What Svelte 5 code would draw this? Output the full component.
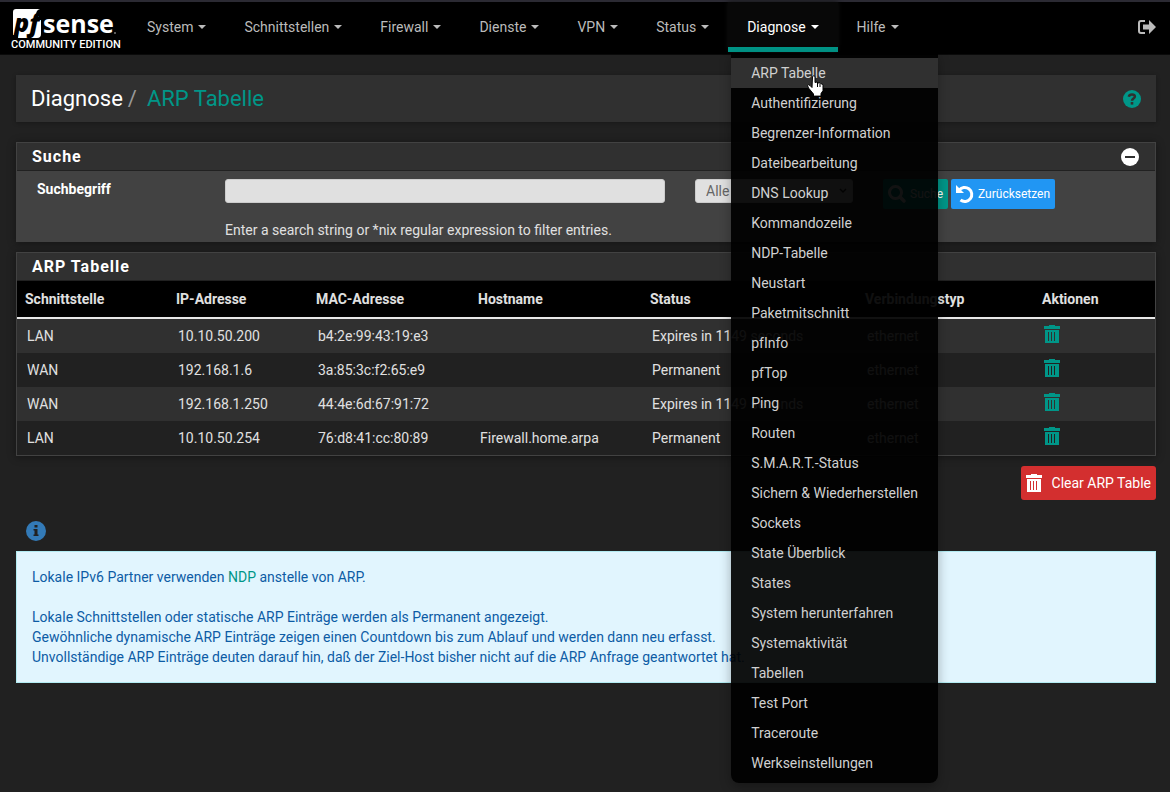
<script>
    const nav = ['System', 'Schnittstellen', 'Firewall', 'Dienste', 'VPN', 'Status', 'Diagnose', 'Hilfe'];

    const menu = [
        'ARP Tabelle',
        'Authentifizierung',
        'Begrenzer-Information',
        'Dateibearbeitung',
        'DNS Lookup',
        'Kommandozeile',
        'NDP-Tabelle',
        'Neustart',
        'Paketmitschnitt',
        'pfInfo',
        'pfTop',
        'Ping',
        'Routen',
        'S.M.A.R.T.-Status',
        'Sichern & Wiederherstellen',
        'Sockets',
        'State Überblick',
        'States',
        'System herunterfahren',
        'Systemaktivität',
        'Tabellen',
        'Test Port',
        'Traceroute',
        'Werkseinstellungen'
    ];

    const rows = [
        { iface: 'LAN', ip: '10.10.50.200', mac: 'b4:2e:99:43:19:e3', host: '', status: 'Expires in 1149 seconds' },
        { iface: 'WAN', ip: '192.168.1.6', mac: '3a:85:3c:f2:65:e9', host: '', status: 'Permanent' },
        { iface: 'WAN', ip: '192.168.1.250', mac: '44:4e:6d:67:91:72', host: '', status: 'Expires in 1149 seconds' },
        { iface: 'LAN', ip: '10.10.50.254', mac: '76:d8:41:cc:80:89', host: 'Firewall.home.arpa', status: 'Permanent' }
    ];

    let open = $state('Diagnose');
    let term = $state('');
    let field = $state('Alle');
    let collapsed = $state(false);

    function toggle(name) {
        open = open === name ? '' : name;
    }

    function reset() {
        term = '';
        field = 'Alle';
    }
</script>

{#snippet trash()}
    <svg class="trash" viewBox="0 0 16 18" width="16" height="18" aria-hidden="true">
        <path fill="currentColor" fill-rule="evenodd" d="M5 0h6v1h5v3H0V1h5zM1 5h14v13H1zM4 7v9h1V7zm3 0v9h1V7zm3 0v9h1V7z" />
    </svg>
{/snippet}

<div class="page">
    <header>
        <a class="brand" href="#home" aria-label="pfSense Community Edition">
            <svg viewBox="0 0 106 30" width="106" height="30">
                <path fill="#fff" d="M5 0h24q-4 1-4 6h3v2h-3v3h5v14q0 4-4 4H7V26H2V3q0-3 3-3z" />
                <text class="logo-pf" x="3" y="23">pf</text>
                <text class="logo-sense" x="32" y="24">sense</text>
                <circle cx="104" cy="24" r="1" fill="#777" />
            </svg>
            <span>COMMUNITY EDITION</span>
        </a>
        <nav>
            {#each nav as name}
                <div class="nav-item" class:active={open === name}>
                    <button class="nav-link" aria-expanded={open === name} onclick={() => toggle(name)}>
                        {name}<span class="caret"></span>
                    </button>
                    {#if name === 'Diagnose' && open === name}
                        <ul class="dropdown">
                            {#each menu as entry, i}
                                <li>
                                    <a href="#menu" class:hover={i === 0}>{entry}</a>
                                    {#if i === 0}
                                        <svg class="pointer" viewBox="0 0 17 22" width="17" height="22" aria-hidden="true">
                                            <path fill="#fff" stroke="#000" d="M5.500 1.500q1.500-1.500 2.500 0v6l2-.5 1 1 2-.2 1 1 1.500.3.500 1.500v5l-2 3v2.500H6.500V19L1.500 13l-1-2.500q1-1.500 2.500 0l2 2z" />
                                            <path stroke="#000" d="M10.500 8v4M13 8.500V12" />
                                        </svg>
                                    {/if}
                                </li>
                            {/each}
                        </ul>
                    {/if}
                </div>
            {/each}
        </nav>
        <a class="logout" href="#logout" aria-label="Abmelden">
            <svg viewBox="0 0 18 14" width="18" height="14">
                <path fill="none" stroke="currentColor" stroke-width="2" d="M7 1H3Q1 1 1 3v8q0 2 2 2h4" />
                <path fill="currentColor" d="M5 4.500h6V0l7 7-7 7V9.500H5z" />
            </svg>
        </a>
    </header>

    <main>
        <div class="breadcrumb">
            <h1>Diagnose<span class="slash">/</span><a href="#arp">ARP Tabelle</a></h1>
            <a class="help" href="#help" aria-label="Hilfe">
                <svg viewBox="0 0 18 18" width="18" height="18">
                    <circle cx="9" cy="9" r="9" fill="currentColor" />
                    <path fill="none" stroke="#303030" stroke-width="2.500" d="M5.800 6.800Q6.300 4.500 9 4.500t2.900 2.100c0 2-2.900 2-2.900 4.200" />
                    <path fill="#303030" d="M7.700 12h2.600v2.600H7.700z" />
                </svg>
            </a>
        </div>

        <section class="panel">
            <div class="panel-heading">
                <h2>Suche</h2>
                <button class="collapse" aria-label="Suche einklappen" onclick={() => (collapsed = !collapsed)}>
                    <svg viewBox="0 0 18 18" width="18" height="18">
                        <circle cx="9" cy="9" r="9" fill="#fff" />
                        <path fill="#303030" d="M4 8h10v2H4z" />
                    </svg>
                </button>
            </div>
            {#if !collapsed}
                <form class="search" onsubmit={(e) => e.preventDefault()}>
                    <label for="term">Suchbegriff</label>
                    <div class="term">
                        <input id="term" type="text" bind:value={term} />
                        <span>Enter a search string or *nix regular expression to filter entries.</span>
                    </div>
                    <div class="field">
                        <select aria-label="Feld" bind:value={field}>
                            <option>Alle</option>
                            <option>IP-Adresse</option>
                            <option>MAC-Adresse</option>
                            <option>Hostname</option>
                        </select>
                        <svg viewBox="0 0 8 6" width="8" height="6" aria-hidden="true">
                            <path fill="none" stroke="#222" stroke-width="1.500" d="M1 1l3 3 3-3" />
                        </svg>
                    </div>
                    <div class="buttons">
                        <button class="btn primary">
                            <svg viewBox="0 0 18 18" width="18" height="18" aria-hidden="true">
                                <circle cx="7.500" cy="7.500" r="6" fill="none" stroke="currentColor" stroke-width="3" />
                                <path stroke="currentColor" stroke-width="3.500" stroke-linecap="round" d="M12 12l4 4" />
                            </svg>
                            Suche
                        </button>
                        <button class="btn info" type="button" onclick={reset}>
                            <svg viewBox="0 0 18 18" width="18" height="18" aria-hidden="true">
                                <path fill="none" stroke="currentColor" stroke-width="3" d="M3 5.500A7 7 0 1 1 4.500 15" />
                                <path fill="currentColor" d="M0 0l8 8H0z" />
                            </svg>
                            Zurücksetzen
                        </button>
                    </div>
                </form>
            {/if}
        </section>

        <section class="panel">
            <div class="panel-heading">
                <h2>ARP Tabelle</h2>
            </div>
            <table>
                <thead>
                    <tr>
                        <th class="c-iface">Schnittstelle</th>
                        <th class="c-ip">IP-Adresse</th>
                        <th class="c-mac">MAC-Adresse</th>
                        <th class="c-host">Hostname</th>
                        <th class="c-status">Status</th>
                        <th class="c-type">Verbindungstyp</th>
                        <th>Aktionen</th>
                    </tr>
                </thead>
                <tbody>
                    {#each rows as row}
                        <tr>
                            <td>{row.iface}</td>
                            <td>{row.ip}</td>
                            <td>{row.mac}</td>
                            <td>{row.host}</td>
                            <td>{row.status}</td>
                            <td>ethernet</td>
                            <td><a class="delete" href="#delete" aria-label="Eintrag löschen">{@render trash()}</a></td>
                        </tr>
                    {/each}
                </tbody>
            </table>
        </section>

        <div class="actions">
            <button class="clear">{@render trash()}Clear ARP Table</button>
        </div>

        <button class="info-toggle" aria-label="Info">
            <svg viewBox="0 0 20 20" width="20" height="20">
                <circle cx="10" cy="10" r="10" fill="#337ab7" />
                <path fill="#212121" d="M8.500 4h3v2.500h-3zM7.500 8h4v5.500h1V15h-5v-1.500h1v-4h-1z" />
            </svg>
        </button>

        <div class="alert">
            <p>Lokale IPv6 Partner verwenden <a href="#ndp">NDP</a> anstelle von ARP.</p>
            <p>
                Lokale Schnittstellen oder statische ARP Einträge werden als Permanent angezeigt.<br />
                Gewöhnliche dynamische ARP Einträge zeigen einen Countdown bis zum Ablauf und werden dann neu erfasst.<br />
                Unvollständige ARP Einträge deuten darauf hin, daß der Ziel-Host bisher nicht auf die ARP Anfrage geantwortet hat.
            </p>
        </div>
    </main>
</div>

<style>
    :global(body) {
        background: #212121;
        color: #e0e0e0;
        font-family: Roboto, "Liberation Sans", sans-serif;
        font-size: 14px;
        line-height: 20px;
    }

    .page {
        min-height: 100vh;
    }

    button,
    input,
    select {
        font: inherit;
    }

    button {
        border: none;
        cursor: pointer;
    }

    a {
        text-decoration: none;
        color: #009688;
    }

    svg {
        display: block;
        overflow: visible;
    }

    header {
        display: flex;
        align-items: stretch;
        height: 52px;
        background: #000;
        border-top: 2px solid #2b2a33;
        border-bottom: 1px solid #0a0a0a;
    }

    .brand {
        display: flex;
        flex-direction: column;
        width: 118px;
        box-sizing: border-box;
        margin-right: 10px;
        padding: 7px 0 0 11px;
        color: #fff;
    }

    .brand span {
        font-size: 11px;
        font-weight: 500;
        line-height: 12px;
        white-space: nowrap;
    }

    .logo-pf {
        font: italic 800 25px "Open Sans", sans-serif;
        fill: #000;
    }

    .logo-sense {
        font: 700 25px "Open Sans", sans-serif;
        fill: #fff;
    }

    nav {
        display: flex;
        flex: 1;
    }

    .nav-item {
        position: relative;
    }

    .nav-link {
        display: flex;
        align-items: center;
        height: 50px;
        padding: 0 19px;
        background: none;
        color: #bbb;
    }

    .caret {
        margin-left: 5px;
        border: 4px solid transparent;
        border-top-color: currentColor;
        border-bottom: none;
    }

    .active .nav-link {
        background: #080808;
        border-bottom: 5px solid #009688;
        padding-top: 5px;
        color: #fff;
        box-shadow: 0 0 5px #111;
    }

    .dropdown {
        position: absolute;
        z-index: 10;
        top: 51px;
        left: 3px;
        margin: 0;
        padding: 5px 0;
        list-style: none;
        background: rgba(0, 0, 0, 0.93);
        border-radius: 0 0 8px 8px;
        box-shadow: 0 4px 12px rgba(0, 0, 0, 0.3);
    }

    .dropdown li {
        position: relative;
    }

    .dropdown a {
        display: block;
        padding: 5px 20px;
        color: #d0d0d0;
        white-space: nowrap;
    }

    .dropdown a.hover,
    .dropdown a:hover {
        background: #303030;
    }

    .pointer {
        position: absolute;
        top: 17px;
        left: 76px;
    }

    .logout {
        align-self: center;
        margin-right: 14px;
        padding-bottom: 2px;
        color: #bbb;
    }

    main {
        padding: 20px 14px 20px 16px;
    }

    .breadcrumb {
        display: flex;
        align-items: center;
        justify-content: space-between;
        height: 47px;
        margin-bottom: 20px;
        padding: 0 15px;
        background: #303030;
        box-shadow: 0 1px 4px rgba(0, 0, 0, 0.3);
    }

    h1 {
        margin: 0;
        color: #fff;
        font-size: 22px;
        font-weight: 400;
    }

    .slash {
        margin: 0 10px 0 5px;
        color: #999;
    }

    .panel {
        margin-bottom: 10px;
        border: 1px solid #424242;
        background: #212121;
        box-shadow: 0 1px 8px rgba(0, 0, 0, 0.4);
    }

    .panel-heading {
        display: flex;
        align-items: center;
        justify-content: space-between;
        height: 27px;
        padding: 0 16px 0 15px;
        background: #303030;
        border-bottom: 1px solid #212121;
    }

    h2 {
        margin: 0;
        color: #fff;
        font-size: 16px;
        font-weight: 700;
        letter-spacing: 1px;
    }

    .collapse {
        padding: 0;
        background: none;
    }

    .search {
        display: grid;
        grid-template-columns: 2fr 5fr 2fr 3fr;
        padding: 8px 5px 1px;
        background: #424242;
    }

    .search > * {
        min-width: 0;
        padding: 0 15px;
    }

    .search label {
        color: #fff;
        font-weight: 700;
    }

    .term input {
        display: block;
        box-sizing: border-box;
        width: 100%;
        height: 24px;
        margin-bottom: 17px;
        padding: 0 10px;
        background: #e0e0e0;
        border: 1px solid #ccc;
        border-radius: 3px;
        color: #666;
    }

    .field svg {
        float: right;
        margin: -15px 6px 0 0;
    }

    .field select {
        display: block;
        appearance: none;
        width: 100%;
        height: 24px;
        padding: 0 10px;
        background: #e0e0e0;
        border: 1px solid #ccc;
        border-radius: 3px;
        color: #666;
    }

    .buttons {
        display: flex;
        align-items: flex-start;
        gap: 3px;
    }

    .btn {
        display: flex;
        align-items: center;
        gap: 4px;
        height: 30px;
        padding: 0 5px;
        border-radius: 2px;
        color: #fff;
        font-size: 12px;
        white-space: nowrap;
    }

    .primary {
        background: #009688;
    }

    .info {
        background: #2196f3;
    }

    table {
        width: 100%;
        border-collapse: collapse;
        table-layout: fixed;
    }

    thead {
        background: #000;
        border-bottom: 2px solid #e8e8e8;
    }

    th {
        height: 36px;
        padding: 0 8px;
        text-align: left;
    }

    td {
        height: 34px;
        padding: 0 10px;
        white-space: nowrap;
    }

    tbody tr:nth-child(odd) {
        background: #303030;
    }

    .c-iface {
        width: 135px;
    }

    .c-ip {
        width: 124px;
    }

    .c-mac {
        width: 146px;
    }

    .c-host {
        width: 156px;
    }

    .c-status {
        width: 199px;
    }

    .c-type {
        width: 161px;
    }

    .delete {
        display: inline-block;
        padding-bottom: 4px;
        vertical-align: middle;
    }

    .actions {
        display: flex;
        justify-content: flex-end;
    }

    .clear {
        display: flex;
        align-items: center;
        gap: 10px;
        height: 34px;
        padding: 0 5px;
        background: #d32f2f;
        border-radius: 3px;
        color: #fff;
    }

    .info-toggle {
        display: block;
        margin: 21px 10px 10px;
        padding: 0;
        background: none;
    }

    .alert {
        padding: 15px;
        background: #e1f5fe;
        border: 1px solid #b2ebf2;
        color: #0d5ca5;
    }

    .alert p {
        margin: 0 0 20px;
    }

    .alert p:last-child {
        margin: 0;
    }
</style>
